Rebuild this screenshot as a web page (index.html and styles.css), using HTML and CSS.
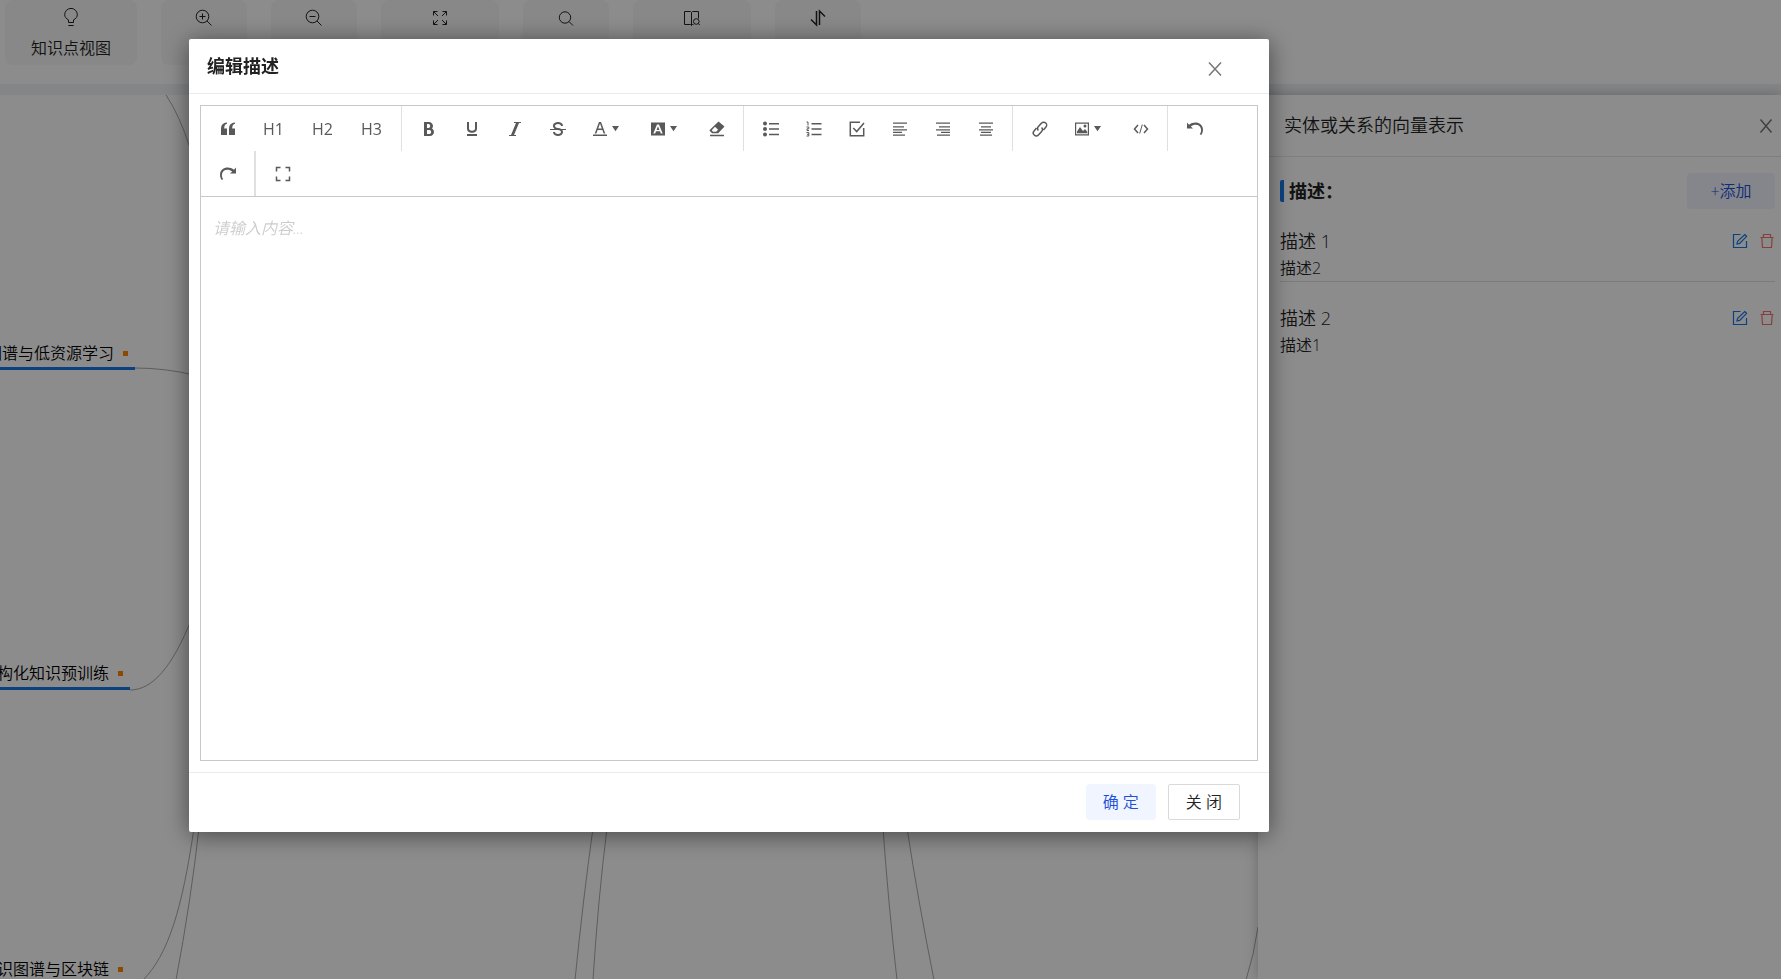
FILE: index.html
```html
<!DOCTYPE html>
<html lang="zh-CN">
<head>
<meta charset="utf-8">
<title>编辑描述</title>
<link rel="stylesheet" href="styles.css">
</head>
<body>
<div class="app">
  <header class="tools">
    <button class="tool tool-xl" type="button">
      <svg class="ico20" viewBox="0 0 20 20"><path d="M7.500 14.500v-2.600C5.200 10.700 3.700 9 3.700 6.700a6.300 6.300 0 0 1 12.600 0c0 2.300-1.500 4-3.800 5.200v2.600zM7.300 17.500h5.400"/></svg>
      <span>知识点视图</span>
    </button>
    <button class="tool" type="button" aria-label="放大">
      <svg class="ico20" viewBox="0 0 20 20"><circle cx="8.500" cy="8.500" r="6.300"/><path d="M13 13l4.500 4.500M5.500 8.500h6M8.500 5.500v6"/></svg>
    </button>
    <button class="tool" type="button" aria-label="缩小">
      <svg class="ico20" viewBox="0 0 20 20"><circle cx="8.500" cy="8.500" r="6.300"/><path d="M13 13l4.500 4.500M5.500 8.500h6"/></svg>
    </button>
    <button class="tool tool-lg" type="button" aria-label="适应画布">
      <svg class="ico20" viewBox="0 0 20 20"><path d="M3.500 7.500v-4h4M3.500 3.500l4.500 4.500M12.500 3.500h4v4M16.500 3.500L12 8M3.500 12.500v4h4M3.500 16.500L8 12M16.500 12.500v4h-4M16.500 16.500L12 12"/></svg>
    </button>
    <button class="tool" type="button" aria-label="搜索">
      <svg class="ico20" viewBox="0 0 20 20"><circle cx="9" cy="9.500" r="5.700"/><path d="M13 13.500l4 4"/></svg>
    </button>
    <button class="tool tool-lg" type="button" aria-label="查看图例">
      <svg class="ico20" viewBox="0 0 20 20"><path d="M9.500 4.500L8.500 3.500H2.500v13h6l1 1zM9.500 4.500l1-1h6v7M9.500 17.500l1-1h1"/><circle cx="14.300" cy="13.500" r="2.800"/><path d="M16.300 15.500l1.500 1.500"/></svg>
    </button>
    <button class="tool" type="button" aria-label="排序">
      <svg class="ico20 thick" viewBox="0 0 20 20"><path d="M8.500 3v14L3 11.500M11.500 17V3L17 8.500"/></svg>
    </button>
  </header>

  <main class="workspace">
    <section class="canvas">
      <svg class="edges" width="1258" height="884" viewBox="0 95 1258 884">
        <path d="M166 95Q180 116 190 148M135 368Q165 368 194 375M130 690C152 690 172 668 192 618M194 828C182 910 168 955 143 980M199 828Q191 900 176 980M593 828Q583 900 575 980M607 828Q598 900 593 980M883 828Q888 900 897 980M907 828Q918 900 934 980M1258 927Q1254 955 1246 980"/>
      </svg>
      <div class="node node-a">图谱与低资源学习<i class="dot"></i></div>
      <div class="node node-b">构化知识预训练<i class="dot"></i></div>
      <div class="node node-c">识图谱与区块链<i class="dot"></i></div>
    </section>

    <aside class="panel">
      <div class="panel-head">
        <h2 class="panel-title">实体或关系的向量表示</h2>
        <button class="close" type="button" aria-label="关闭面板"><svg viewBox="0 0 16 16"><path d="M2.500 1.500l11 13M13.500 1.500l-11 13"/></svg></button>
      </div>
      <div class="panel-body">
        <div class="section-head">
          <h3 class="section-title">描述：</h3>
          <button class="btn btn-soft btn-add" type="button">+添加</button>
        </div>
        <article class="item">
          <div class="item-head">
            <h4 class="item-title">描述 1</h4>
            <button class="mini edit" type="button" aria-label="编辑描述 1"><svg viewBox="0 0 16 16"><path d="M8.500 1.500h-7v13h13V8"/><path d="M5 11l.6-2.800L12.800 1.500l1.800 1.800L7.700 10.400z"/></svg></button>
            <button class="mini del" type="button" aria-label="删除描述 1"><svg viewBox="0 0 16 16"><path d="M1.500 4.500h13M4.500 4.500V1.500h7v3M2.800 4.500l.7 10h9l.7-10"/></svg></button>
          </div>
          <p class="item-text">描述2</p>
        </article>
        <article class="item">
          <div class="item-head">
            <h4 class="item-title">描述 2</h4>
            <button class="mini edit" type="button" aria-label="编辑描述 2"><svg viewBox="0 0 16 16"><path d="M8.500 1.500h-7v13h13V8"/><path d="M5 11l.6-2.800L12.800 1.500l1.800 1.800L7.700 10.400z"/></svg></button>
            <button class="mini del" type="button" aria-label="删除描述 2"><svg viewBox="0 0 16 16"><path d="M1.500 4.500h13M4.500 4.500V1.500h7v3M2.800 4.500l.7 10h9l.7-10"/></svg></button>
          </div>
          <p class="item-text">描述1</p>
        </article>
      </div>
    </aside>
  </main>
</div>

<div class="mask">
  <section class="modal" role="dialog" aria-modal="true" aria-labelledby="modal-title">
    <header class="modal-head">
      <h1 class="modal-title" id="modal-title">编辑描述</h1>
      <button class="close" type="button" aria-label="关闭窗口"><svg viewBox="0 0 16 16"><path d="M2 1.500l12 13M14 1.500l-12 13"/></svg></button>
    </header>
    <div class="modal-body">
      <div class="editor">
        <div class="bar" role="toolbar" aria-label="格式">
          <div class="group">
            <button class="cmd" type="button" aria-label="引用"><svg viewBox="0 0 16 16"><path d="M7 1.500v1.300C5 3.300 4.200 5 4.200 7.500H7V14H1V8C1 4 3 1.800 7 1.500zM15 1.500v1.300c-2 .5-2.800 2.200-2.800 4.700H15V14H9V8c0-4 2-6.200 6-6.500z"/></svg></button>
            <button class="cmd cmd-h" type="button">H1</button>
            <button class="cmd cmd-h" type="button">H2</button>
            <button class="cmd cmd-h" type="button">H3</button>
          </div>
          <div class="group">
            <button class="cmd" type="button" aria-label="加粗"><svg viewBox="0 0 1024 1024"><path d="M707.900 484.600A254.900 254.900 0 0 0 768 320c0-141-115-256-256-256H192v896h384c141 0 256-115 256-256a256 256 0 0 0-124.100-219.400zM384 192h101.500c56 0 101.500 57.400 101.500 128s-45.500 128-101.500 128H384V192zm159 640H384V576h159c58.500 0 106 57.400 106 128s-47.500 128-106 128z"/></svg></button>
            <button class="cmd" type="button" aria-label="下划线"><svg viewBox="0 0 16 16"><path d="M3 1h2v6.500c0 3 6 3 6 0V1h2v6.500c0 5.800-10 5.800-10 0zM3 13h10v2H3z"/></svg></button>
            <button class="cmd" type="button" aria-label="斜体"><svg viewBox="0 0 1024 1024"><path d="M896 64v64H768L448 896h128v64H128v-64h128l320-768H448V64z"/></svg></button>
            <button class="cmd" type="button" aria-label="删除线"><svg viewBox="0 0 1024 1024"><path d="M1024 512v64H789.500c27.500 38.500 42.500 82.700 42.500 128 0 70.900-36.700 139-100.600 187C672 935.500 594 960 512 960s-160-24.500-219.400-69C228.600 843 192 774.900 192 704h128c0 69.400 88 128 192 128s192-58.600 192-128-88-128-192-128H0v-64h299.500a386 386 0 0 1-6.900-5C228.600 459 192 390.900 192 320s36.700-139 100.600-187C352 88.500 430 64 512 64s160 24.500 219.400 69C795.300 181 832 249 832 320H704c0-69.400-88-128-192-128s-192 58.600-192 128 88 128 192 128c79 0 154 22.700 212.500 64z"/></svg></button>
            <button class="cmd cmd-drop" type="button" aria-label="文字颜色"><svg viewBox="0 0 1024 1024"><path d="M64 864h896v96H64zM360.600 576h302.800l81.500 224h102.200L579.200 64H444.800L176.900 800h102.200zM512 160l116.500 320h-233z"/></svg><svg class="caret" viewBox="0 0 8 8"><path d="M0 1h8L4 7z"/></svg></button>
            <button class="cmd cmd-drop" type="button" aria-label="背景色"><svg viewBox="0 0 16 16"><path fill-rule="evenodd" d="M1 1.500h14v13H1zM7 3.500l-3.700 9h1.900l.8-2.200h4l.8 2.200h1.900l-3.700-9zM8 5.300l1.400 3.600H6.600z"/></svg><svg class="caret" viewBox="0 0 8 8"><path d="M0 1h8L4 7z"/></svg></button>
            <button class="cmd" type="button" aria-label="清除格式"><svg viewBox="0 0 16 16"><path fill-rule="evenodd" d="M9.500.5l6 5-6.300 6.800H3.200L.7 10V9zM6 5.800L2.700 9.300l1.400 1.500h3l2-2.100zM1 13.800h14v1.500H1z"/></svg></button>
          </div>
          <div class="group">
            <button class="cmd" type="button" aria-label="无序列表"><svg viewBox="0 0 16 16"><circle cx="2" cy="2.500" r="2"/><circle cx="2" cy="8" r="2"/><circle cx="2" cy="13.500" r="2"/><path d="M6 2h10v1.500H6zM6 7.300h10v1.500H6zM6 12.700h10v1.500H6z"/></svg></button>
            <button class="cmd" type="button" aria-label="有序列表"><svg viewBox="0 0 16 16"><path d="M5.500 2h10v1.500h-10zM5.500 7.300h10v1.500h-10zM5.500 12.700h10v1.500h-10z"/><path class="line" d="M.5 1H2v3.500M.5 6h2.300v1.800H1v1.700h2M.5 11.500h2.300v3.500H.5M1 13.300h1.800"/></svg></button>
            <button class="cmd" type="button" aria-label="待办"><svg viewBox="0 0 16 16"><path class="line wide" d="M11 1.300H1.300v13.400h13.400V7"/><path class="line wide" d="M4.300 7l3.400 3.600L15 2"/></svg></button>
            <button class="cmd" type="button" aria-label="左对齐"><svg viewBox="0 0 16 16"><path d="M1 1.500h14v1.200H1zM1 5.200h11v1.200H1zM1 8.200h14v1.200H1zM1 10.800h9V12H1zM1 13.500h12v1.200H1z"/></svg></button>
            <button class="cmd" type="button" aria-label="右对齐"><svg viewBox="0 0 16 16"><path d="M1 1.500h14v1.200H1zM4 5.200h11v1.200H4zM1 8.200h14v1.200H1zM6 10.800h9V12H6zM2 13.500h13v1.200H2z"/></svg></button>
            <button class="cmd" type="button" aria-label="居中对齐"><svg viewBox="0 0 16 16"><path d="M1 1.500h14v1.200H1zM3 5.200h10v1.200H3zM1 8.200h14v1.200H1zM3 10.800h10V12H3zM2 13.500h12v1.200H2z"/></svg></button>
          </div>
          <div class="group">
            <button class="cmd" type="button" aria-label="链接"><svg viewBox="0 0 16 16"><path class="line wide" d="M6.400 9.600a3 3 0 0 1 0-4l3.200-3.500a2.900 2.900 0 0 1 4.300 4L11.500 9M9.600 6.400a3 3 0 0 1 0 4l-3.200 3.500a2.900 2.900 0 0 1-4.300-4L4.500 7"/></svg></button>
            <button class="cmd cmd-drop" type="button" aria-label="图片"><svg viewBox="0 0 16 16"><path fill-rule="evenodd" d="M1 1.500h14v13H1zM2.200 2.700v10.600h11.600V2.700zM3 12.300V10.500l3-4.500 3 4 2-2 2.200 2.800v1.500z"/><circle cx="11" cy="5" r="1.500"/></svg><svg class="caret" viewBox="0 0 8 8"><path d="M0 1h8L4 7z"/></svg></button>
            <button class="cmd" type="button" aria-label="代码"><svg viewBox="0 0 16 16"><path class="line wide" d="M5 4L1.500 8 5 12M11 4l3.500 4L11 12"/><path class="line" d="M9.300 3.500l-2.600 9"/></svg></button>
          </div>
          <div class="group group-last">
            <button class="cmd" type="button" aria-label="撤销"><svg viewBox="0 0 16 16"><path d="M0 1.500l2 2.300C7-.2 15.500 1 16 8.500c0 2.500-.8 4.300-1.800 5.500l-1.400-.8C14 11.500 14.300 10 14 8 13.300 3.500 7.500 2.500 3.800 5.600L6 7.500H0z"/></svg></button>
          </div>
          <div class="group group-redo">
            <button class="cmd" type="button" aria-label="重做"><svg viewBox="0 0 16 16"><path d="M16 1.500l-2 2.300C9-.2.500 1 0 8.500 0 11 .8 12.800 1.800 14l1.400-.8C2 11.500 1.700 10 2 8c.7-4.500 6.500-5.500 10.200-2.400L10 7.500h6z"/></svg></button>
          </div>
          <div class="group group-last">
            <button class="cmd" type="button" aria-label="全屏"><svg viewBox="0 0 16 16"><path class="line wide" d="M1.500 5.500v-4h4M10.500 1.500h4v4M1.500 10.500v4h4M10.500 14.500h4v-4"/></svg></button>
          </div>
        </div>
        <textarea class="content" aria-label="描述内容" placeholder="请输入内容..."></textarea>
      </div>
    </div>
    <footer class="modal-foot">
      <button class="btn btn-soft" type="button">确 定</button>
      <button class="btn btn-line" type="button">关 闭</button>
    </footer>
  </section>
</div>
</body>
</html>
```
FILE: styles.css
```css
* {
  box-sizing: border-box;
}

body {
  margin: 0;
  overflow: hidden;
  font-family: "Open Sans", "Noto Sans CJK SC", sans-serif;
  font-size: 16px;
  font-weight: 350;
  line-height: 26px;
  color: #222;
}

h1, h2, h3, h4, p {
  margin: 0;
}

button, textarea {
  font: inherit;
  color: inherit;
}

button {
  padding: 0;
  border: 0;
  background: none;
  cursor: pointer;
}

svg {
  display: block;
}

.app {
  display: flex;
  flex-direction: column;
  height: 100vh;
  background: #f0f2f5;
}

.tools {
  display: flex;
  align-items: flex-start;
  gap: 24px;
  height: 84px;
  padding: 0 5px;
  background: #fff;
}

.tool {
  display: flex;
  flex-direction: column;
  align-items: center;
  gap: 7px;
  width: 86px;
  height: 65px;
  padding-top: 8px;
  border-radius: 8px;
  background: #f8f8f8;
}

.tool-lg {
  width: 118px;
}

.tool-xl {
  width: 132px;
}

.ico20 {
  width: 20px;
  height: 20px;
  fill: none;
  stroke: #222;
  stroke-width: 1;
}

.thick {
  stroke-width: 1.5;
}

.workspace {
  display: flex;
  flex: 1;
  min-height: 0;
  margin-top: 11px;
}

.canvas {
  position: relative;
  flex: 1;
  min-width: 0;
  overflow: hidden;
  background: #fff;
}

.edges {
  fill: none;
  stroke: #aaa;
  stroke-width: 1;
}

.node {
  position: absolute;
  display: flex;
  align-items: center;
  gap: 9px;
  height: 31px;
  padding-right: 7px;
  border-bottom: 3px solid #1677e8;
  white-space: nowrap;
  color: #000;
}

.node-a {
  left: -14px;
  top: 244px;
}

.node-b {
  left: -3px;
  top: 564px;
}

.node-c {
  left: -3px;
  top: 860px;
}

.dot {
  width: 5px;
  height: 5px;
  background: #ff8800;
}

.panel {
  z-index: 1;
  width: 523px;
  background: #fff;
  box-shadow: 0 0 12px rgba(0, 0, 0, 0.25);
}

.panel-head {
  display: flex;
  align-items: center;
  justify-content: space-between;
  height: 62px;
  padding: 0 7px 0 26px;
  border-bottom: 1px solid #e8e8e8;
}

.panel-title {
  padding-bottom: 2px;
  font-size: 18px;
  font-weight: 350;
}

.close svg {
  width: 16px;
  height: 16px;
  fill: none;
  stroke: #777;
  stroke-width: 1.5;
}

.panel-body {
  padding: 16px 6px 0 22px;
}

.section-head {
  display: flex;
  align-items: center;
  justify-content: space-between;
  height: 36px;
  margin-bottom: 18px;
}

.section-title {
  padding-left: 5px;
  border-left: 4px solid #1677e8;
  border-radius: 2px;
  font-size: 18px;
  font-weight: 700;
  line-height: 22px;
}

.btn {
  height: 36px;
  padding: 0 17px;
  border-radius: 4px;
}

.btn-soft {
  background: #f0f5ff;
  color: #1d4fd8;
}

.btn-add {
  min-width: 88px;
}

.btn-line {
  border: 1px solid #d9d9d9;
  border-radius: 2px;
  background: #fff;
}

.item {
  margin-bottom: 22px;
}

.item:not(:last-child) {
  border-bottom: 1px solid #e0e0e0;
}

.item-head {
  display: flex;
  align-items: center;
  gap: 11px;
  height: 28px;
}

.item-title {
  flex: 1;
  font-size: 18px;
  font-weight: 350;
}

.mini svg {
  width: 16px;
  height: 16px;
  fill: none;
  stroke-width: 1.2;
}

.edit svg {
  stroke: #1677e8;
}

.del svg {
  stroke: #f5736f;
}

.mask {
  position: fixed;
  inset: 0;
  z-index: 10;
  padding: 39px 0 0 189px;
  background: rgba(0, 0, 0, 0.45);
}

.modal {
  display: flex;
  flex-direction: column;
  width: 1080px;
  max-width: 100%;
  border-radius: 2px;
  background: #fff;
  box-shadow: 0 3px 24px rgba(0, 0, 0, 0.5);
}

.modal-head {
  display: flex;
  align-items: center;
  justify-content: space-between;
  height: 55px;
  padding: 0 46px 0 18px;
  border-bottom: 1px solid #ebebeb;
}

.modal-head .close {
  padding-top: 5px;
}

.modal-title {
  font-size: 18px;
  font-weight: 700;
}

.modal-body {
  padding: 11px;
}

.editor {
  border: 1px solid #c8c8c8;
}

.bar {
  display: flex;
  flex-wrap: wrap;
  border-bottom: 1px solid #c8c8c8;
}

.group {
  display: flex;
  height: 45px;
  box-sizing: content-box;
  padding: 0 5px;
  border-right: 1px solid #e0e0e0;
}

.group-redo {
  border-right-width: 2px;
}

.group-last {
  border-right: 0;
}

.cmd {
  display: flex;
  align-items: center;
  justify-content: center;
  gap: 4px;
  width: 43px;
  color: #595959;
}

.cmd svg {
  width: 16px;
  height: 16px;
  fill: #595959;
}

.cmd .caret {
  width: 7px;
  height: 7px;
}

.cmd .line {
  fill: none;
  stroke: #595959;
  stroke-width: 1;
}

.cmd .wide {
  stroke-width: 1.5;
}

.cmd-h {
  width: 49px;
  font-weight: 400;
}

.cmd-drop {
  justify-content: flex-start;
  width: 58px;
  padding-left: 13px;
}

.content {
  display: block;
  width: 100%;
  height: 563px;
  padding: 18px 12px;
  border: 0;
  outline: 0;
  resize: none;
  background: #fff;
}

.content::placeholder {
  color: #ccc;
  font-style: italic;
}

.modal-foot {
  display: flex;
  justify-content: flex-end;
  gap: 12px;
  padding: 11px 29px 12px;
  border-top: 1px solid #ebebeb;
}
```
